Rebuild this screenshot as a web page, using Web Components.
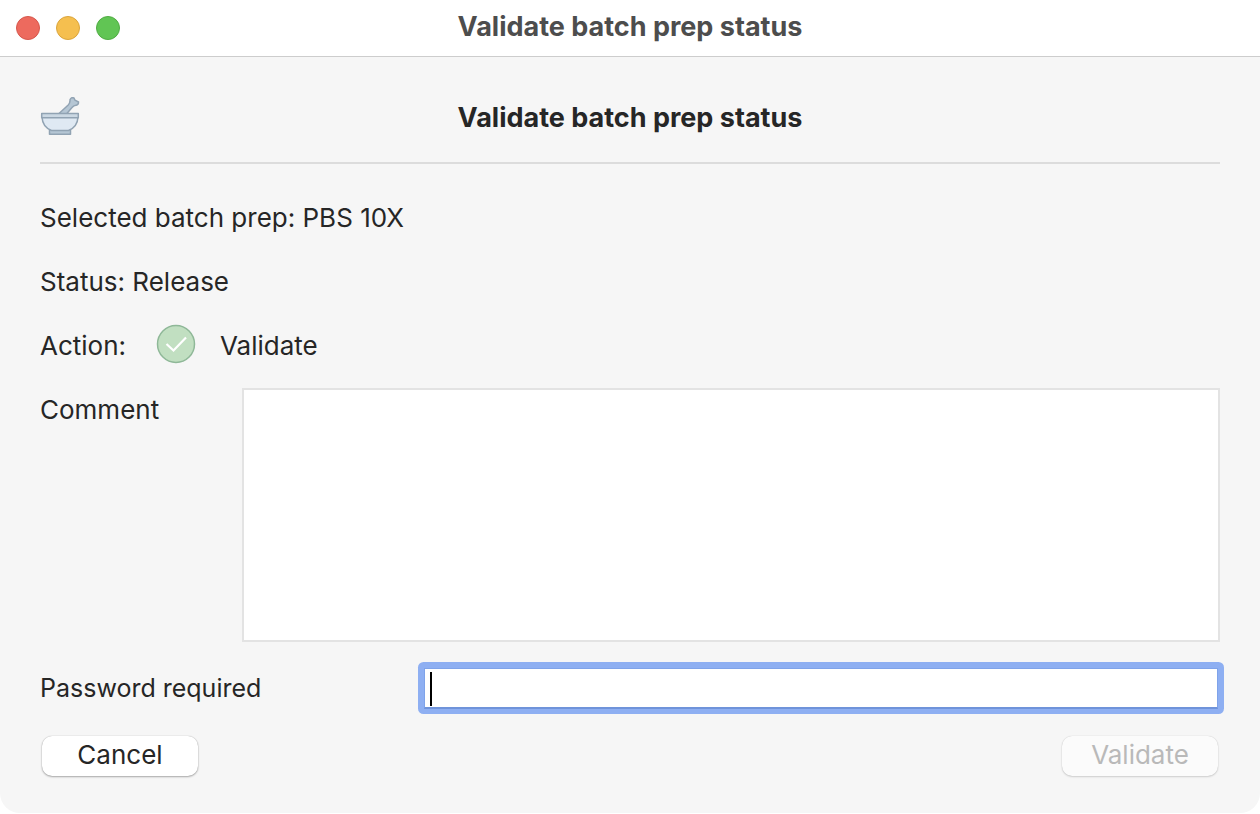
<!DOCTYPE html>
<html lang="en">
<head>
<meta charset="utf-8">
<title>Validate batch prep status</title>
<style>
  body {
    --title-size: 27px;
    margin: 0;
    background: #fff;
    color: #262626;
    font: 26px/40px Inter, "Liberation Sans", sans-serif;
  }
</style>
</head>
<body>
<app-window title="Validate batch prep status">
  <dialog-header>
    <mortar-icon slot="icon"></mortar-icon>
    Validate batch prep status
  </dialog-header>
  <info-row>Selected batch prep: PBS 10X</info-row>
  <info-row>Status: Release</info-row>
  <info-row>
    <span slot="label">Action:</span>
    <check-icon slot="icon"></check-icon>
    Validate
  </info-row>
  <comment-field label="Comment"></comment-field>
  <password-field label="Password required"></password-field>
  <button-bar>
    <push-button label="Cancel"></push-button>
    <push-button label="Validate" disabled></push-button>
  </button-bar>
</app-window>

<script>
// Attaches an open shadow root and fills it with the given markup
class BaseElement extends HTMLElement {
  constructor() {
    super();
    this.attachShadow({ mode: 'open' });
  }

  connectedCallback() {
    const template = document.createElement('template');
    template.innerHTML = this.getStyles() + this.getTemplate();
    this.shadowRoot.replaceChildren(template.content.cloneNode(true));
  }
}

class AppWindow extends BaseElement {
  getTemplate() {
    return `
      <header>
        <div class="lights"><i class="close"></i><i class="min"></i><i class="max"></i></div>
        <div class="title">${this.getAttribute('title')}</div>
      </header>
      <main><slot></slot></main>
    `;
  }

  getStyles() {
    return `
      <style>
        :host {
          display: block;
          background: #f6f6f6;
          border-radius: 0 0 20px 20px;
          overflow: hidden;
        }
        header {
          display: grid;
          grid-template-columns: 1fr auto 1fr;
          align-items: center;
          height: 56px;
          padding: 0 16px;
          background: #fff;
          border-bottom: 1px solid #cdcdcd;
        }
        .lights { display: flex; gap: 16px; }
        i {
          box-sizing: border-box;
          width: 24px;
          height: 24px;
          border-radius: 50%;
        }
        .close { background: #ed6a5e; border: 1px solid #d6574c; }
        .min { background: #f5bf4f; border: 1px solid #dba53c; }
        .max { background: #61c554; border: 1px solid #50ac43; }
        .title {
          padding-bottom: 2px;
          color: #4d4d4d;
          font-size: var(--title-size);
          font-weight: 700;
        }
        main { padding: 40px 40px 36px; }
      </style>
    `;
  }
}

class DialogHeader extends BaseElement {
  getTemplate() {
    return `<slot name="icon"></slot><h1><slot></slot></h1>`;
  }

  getStyles() {
    return `
      <style>
        :host {
          display: grid;
          grid-template-columns: 1fr auto 1fr;
          margin-bottom: 34px;
          padding-bottom: 25px;
          border-bottom: 2px solid #dcdcdc;
        }
        h1 {
          height: 40px;
          margin: 0;
          font-size: var(--title-size);
          font-weight: 700;
          line-height: 42px;
        }
      </style>
    `;
  }
}

class MortarIcon extends BaseElement {
  getTemplate() {
    return `
      <svg viewBox="0 0 40 40" width="40" height="40" stroke="#91a3b3" stroke-width="1.5" stroke-linejoin="round" aria-hidden="true">
        <path fill="#b5c6d4" d="M18.500 17 L28.200 8 Q30.300 5.800 30 2.800 Q31 -0.200 34 1 L35 3.200 L38.500 5 Q38.500 8 36.300 8.200 Q34 8 32 10.500 L26.500 17 Z"/>
        <path fill="#b5c6d4" d="M9.500 32 H30.500 V37.300 H9.500 Z"/>
        <path fill="#dfe9f3" d="M2 20 H38 Q37.500 30 28.500 33.500 H11.500 Q2.500 30 2 20 Z"/>
        <path fill="#cbd8e3" d="M1.700 16.500 H38.300 V20.700 H1.700 Z"/>
      </svg>
    `;
  }

  getStyles() {
    return `<style>:host { display: block; height: 40px; } svg { display: block; }</style>`;
  }
}

class CheckIcon extends BaseElement {
  getTemplate() {
    return `
      <svg viewBox="0 0 40 40" width="40" height="40" aria-hidden="true">
        <circle cx="20" cy="20" r="18.500" fill="#c1dfc1" stroke="#8fb898" stroke-width="1.500"/>
        <path d="M10.500 20 L17.500 26.500 L30 13.500" fill="none" stroke="#fff" stroke-width="2.200"/>
      </svg>
    `;
  }

  getStyles() {
    return `<style>:host { display: block; height: 40px; } svg { display: block; }</style>`;
  }
}

class InfoRow extends BaseElement {
  getTemplate() {
    return `<slot name="label"></slot><slot name="icon"></slot><span><slot></slot></span>`;
  }

  getStyles() {
    return `
      <style>
        :host { display: flex; margin-bottom: 24px; }
        ::slotted([slot="label"]) { width: 116px; }
        ::slotted([slot="icon"]) { margin: -2px 24px 2px 0; }
      </style>
    `;
  }
}

class CommentField extends BaseElement {
  getTemplate() {
    return `
      <label for="comment">${this.getAttribute('label')}</label>
      <textarea id="comment"></textarea>
    `;
  }

  getStyles() {
    return `
      <style>
        :host { display: flex; margin: -2px 0 24px; }
        label { flex: 0 0 202px; line-height: 44px; }
        textarea {
          flex: 1;
          box-sizing: border-box;
          height: 254px;
          padding: 8px;
          background: #fff;
          border: 2px solid #e3e3e3;
          border-radius: 0;
          outline: none;
          resize: none;
          font: inherit;
        }
      </style>
    `;
  }
}

class PasswordField extends BaseElement {
  getTemplate() {
    return `
      <label for="password">${this.getAttribute('label')}</label>
      <div class="box"><input id="password" type="password"><span class="caret"></span></div>
    `;
  }

  getStyles() {
    return `
      <style>
        :host { display: flex; margin-bottom: 26px; }
        label { flex: 0 0 382px; font-size: 25px; line-height: 44px; }
        .box {
          position: relative;
          flex: 1;
          display: flex;
          box-sizing: border-box;
          height: 44px;
          padding: 2px 2px 1px;
          background: #8eaff2;
          border-radius: 2px;
          box-shadow: 0 0 0 4px #8eaff2;
        }
        input {
          flex: 1;
          min-width: 0;
          box-sizing: border-box;
          padding: 0 8px;
          background: #fff;
          border: 1px solid #7fa3ea;
          border-bottom: 2px solid #6f93da;
          outline: none;
          font: inherit;
          caret-color: transparent;
        }
        .caret {
          position: absolute;
          left: 8px;
          top: 6px;
          width: 2px;
          height: 34px;
          background: #000;
        }
      </style>
    `;
  }
}

class ButtonBar extends BaseElement {
  getTemplate() {
    return `<slot></slot>`;
  }

  getStyles() {
    return `
      <style>
        :host { display: flex; justify-content: space-between; padding: 0 2px; }
      </style>
    `;
  }
}

class PushButton extends BaseElement {
  getTemplate() {
    const disabled = this.hasAttribute('disabled') ? 'disabled' : '';
    return `<button type="button" ${disabled}>${this.getAttribute('label')}</button>`;
  }

  getStyles() {
    return `
      <style>
        :host { display: block; }
        button {
          display: block;
          width: 156px;
          height: 40px;
          margin-bottom: 1px;
          padding: 0 0 2px;
          color: inherit;
          background: #fff;
          border: 0;
          border-radius: 10px;
          box-shadow: 0 0 1px rgba(0, 0, 0, .3), 0 1px 2px rgba(0, 0, 0, .3);
          font: inherit;
          line-height: 38px;
        }
        button:disabled {
          color: #b9b9b9;
          background: #fbfbfb;
          box-shadow: 0 0 1px rgba(0, 0, 0, .2), 0 1px 2px rgba(0, 0, 0, .15);
        }
      </style>
    `;
  }
}

customElements.define('app-window', AppWindow);
customElements.define('dialog-header', DialogHeader);
customElements.define('mortar-icon', MortarIcon);
customElements.define('check-icon', CheckIcon);
customElements.define('info-row', InfoRow);
customElements.define('comment-field', CommentField);
customElements.define('password-field', PasswordField);
customElements.define('button-bar', ButtonBar);
customElements.define('push-button', PushButton);
</script>
</body>
</html>
